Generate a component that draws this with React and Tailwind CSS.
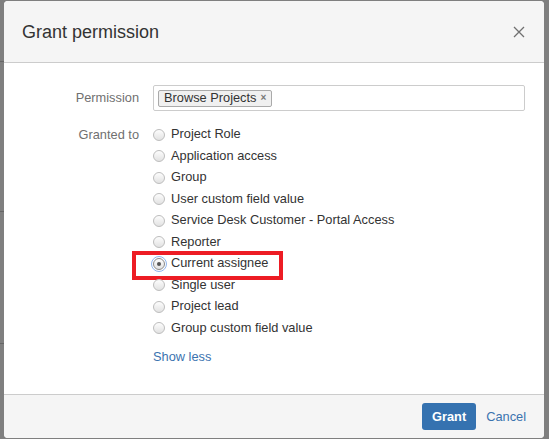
import { useState } from "react";

const options = [
  "Project Role",
  "Application access",
  "Group",
  "User custom field value",
  "Service Desk Customer - Portal Access",
  "Reporter",
  "Current assignee",
  "Single user",
  "Project lead",
  "Group custom field value",
];

function Radio({ checked }) {
  return (
    <span
      className={
        "relative inline-flex h-[12px] w-[12px] shrink-0 items-center justify-center rounded-full border bg-gradient-to-b from-[#fdfdfd] to-[#e2e2e2] " +
        (checked ? "border-[#8a8a8a] outline outline-1 outline-offset-1 outline-[#8fb4ec]" : "border-[#bdbdbd]")
      }
    >
      {checked && <span className="h-[4px] w-[4px] rounded-full bg-[#555]" />}
    </span>
  );
}

export default function App() {
  const [selected, setSelected] = useState("Current assignee");

  return (
    <div className="relative h-[439px] w-[549px] overflow-hidden bg-[#7f7f7f] pl-[4px] pt-[1px] font-['Liberation_Sans',Arial,sans-serif] text-[12.8px] text-[#333]">
      {/* page bits behind the overlay */}
      <div className="absolute left-0 top-[61px] h-px w-[4px] bg-[#666]" />
      <div className="absolute left-0 top-[211px] h-px w-[4px] bg-[#666]" />
      <div className="absolute left-0 top-[343px] h-px w-[4px] bg-[#666]" />

      <div className="flex h-[437px] w-[540px] flex-col overflow-hidden rounded-[4px] bg-white">
        <div className="flex h-[62px] shrink-0 items-center justify-between border-b border-[#cccccc] bg-[#f5f5f5] pl-[18px] pr-[19px]">
          <h2 className="text-[18px] leading-none text-[#333]">Grant permission</h2>
          <svg width="12" height="12" viewBox="0 0 12 12" className="text-[#707070]">
            <path d="M1 1 L11 11 M11 1 L1 11" stroke="currentColor" strokeWidth="1.3" />
          </svg>
        </div>

        <div className="flex-1 pt-[22px]">
          <div className="grid grid-cols-[135px_1fr] gap-x-[14px]">
            <div className="flex h-[26px] items-center justify-end text-[#707070]">Permission</div>
            <div className="mr-[19px] flex h-[26px] items-center rounded-[2px] border border-[#cccccc] px-[4px]">
              <span className="flex h-[17px] items-center gap-[4px] rounded-[2px] border border-[#aaaaaa] bg-[#f0f0f0] px-[5px] leading-none">
                Browse Projects
                <span className="text-[10px] font-bold text-[#777]">×</span>
              </span>
            </div>

            <div className="mt-[13px] flex h-[21.5px] items-center justify-end text-[#707070]">Granted to</div>
            <div className="mt-[13px] flex flex-col">
              {options.map((o) => (
                <label
                  key={o}
                  onClick={() => setSelected(o)}
                  className="relative flex h-[21.5px] cursor-pointer items-center gap-[6px]"
                >
                  <Radio checked={selected === o} />
                  <span className="leading-none">{o}</span>
                  {o === "Current assignee" && (
                    <span className="pointer-events-none absolute left-[-21px] top-[-2px] h-[29px] w-[151px] border-[4px] border-[#ed1c24]" />
                  )}
                </label>
              ))}
              <a href="#" className="mt-[8px] text-[#3b73af]">
                Show less
              </a>
            </div>
          </div>
        </div>

        <div className="flex h-[44px] shrink-0 items-center justify-end gap-[10px] border-t border-[#cccccc] bg-[#f5f5f5] pr-[18px]">
          <button className="h-[27px] rounded-[3px] bg-[#3572b0] px-[10px] font-bold text-white">Grant</button>
          <a href="#" className="text-[#3b73af]">Cancel</a>
        </div>
      </div>
    </div>
  );
}
